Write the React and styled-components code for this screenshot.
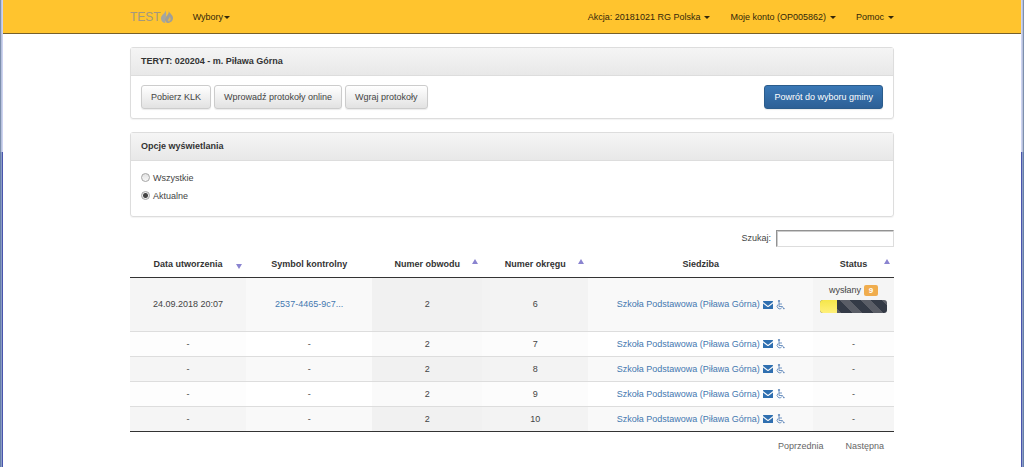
import React, { useState } from "react";
import styled, { createGlobalStyle, css } from "styled-components";

const GlobalStyle = createGlobalStyle`
  *, *::before, *::after { box-sizing: border-box; }
  body {
    margin: 0;
    background: #fff;
    color: #444;
    font: 9px/13px "Liberation Sans", Arial, Helvetica, sans-serif;
  }
  button, input { font: inherit; color: inherit; }
  a { text-decoration: none; }
`;

const Window = styled.div`
  display: grid;
  grid-template-columns: 3px minmax(0, 1fr) 3px;
  min-height: 100vh;
`;

const edgeColumn = (upper, lower) => css`
  linear-gradient(${upper} 152px, ${lower} 152px)
`;

const Edge = styled.div`
  display: flex;
  flex-direction: ${(p) => (p.$right ? "row-reverse" : "row")};
`;

const EdgeLine = styled.span`
  flex: 1;
  background: ${(p) => edgeColumn(p.$upper, p.$lower)};
`;

const Container = styled.div`
  max-width: 764px;
  margin: 0 auto;
`;

const Navbar = styled.header`
  background: #ffc42e;
  border-bottom: 1px solid #76602b;
`;

const NavInner = styled(Container)`
  display: flex;
  align-items: center;
  height: 33px;
  padding-top: 1px;
`;

const Brand = styled.a`
  display: flex;
  align-items: center;
  margin-right: 20px;
  color: #a3987f;
  font-size: 12px;

  svg { display: block; }
`;

const NavRight = styled.nav`
  display: flex;
  gap: 20px;
  margin-left: auto;
`;

const NavButton = styled.button`
  display: flex;
  align-items: center;
  gap: ${(p) => (p.$tight ? "1px" : "4px")};
  padding: 0;
  border: 0;
  background: none;
  color: #33270a;
  white-space: nowrap;

  &::after {
    content: "";
    border: 3px solid transparent;
    border-top-color: #33270a;
    border-bottom: 0;
  }
`;

const Panel = styled.section`
  margin-top: 13px;
  border: 1px solid #ddd;
  border-radius: 3px;
  box-shadow: 0 1px 1px rgba(0, 0, 0, 0.05);
`;

const PanelHeading = styled.h2`
  margin: 0;
  padding: 7px 10px;
  border-bottom: 1px solid #ddd;
  background: linear-gradient(#f5f5f5, #e8e8e8);
  color: #333;
  font-size: 9px;
  line-height: 13px;
`;

const ButtonBar = styled.div`
  display: flex;
  gap: 3px;
  padding: 9px 10px;
`;

const Button = styled.button`
  height: 24px;
  padding: 0 9px;
  border: 1px solid #ccc;
  border-radius: 3px;
  background: linear-gradient(#fff, #e2e2e2);
  box-shadow: 0 1px 1px rgba(0, 0, 0, 0.08);
  white-space: nowrap;

  ${(p) =>
    p.$primary &&
    css`
      margin-left: auto;
      border-color: #2b5c8c;
      background: linear-gradient(#3a78b6, #2d6096);
      color: #fff;
    `}
`;

const Options = styled.div`
  display: flex;
  flex-direction: column;
  gap: 5px;
  padding: 11px 10px 13px;
`;

const Option = styled.label`
  display: flex;
  align-items: center;
  gap: 3px;
`;

const Radio = styled.input`
  appearance: none;
  width: 9px;
  height: 9px;
  margin: 0 0 2px;
  border: 1px solid #a5a5a5;
  border-radius: 50%;
  background: linear-gradient(#e2e2e2, #f8f8f8);

  &:checked {
    background: radial-gradient(circle, #444 0 2px, #eee 3px);
  }
`;

const Search = styled.label`
  display: flex;
  align-items: center;
  justify-content: flex-end;
  gap: 5px;
  margin-top: 13px;
`;

const SearchInput = styled.input`
  width: 118px;
  height: 17px;
  padding: 0 3px;
  border: 1px solid #ddd;
  border-top-color: #929292;
  border-left-color: #929292;
  box-shadow: inset 1px 1px 0 #ccc;
  background: #fff;
`;

const Table = styled.table`
  width: 100%;
  margin-top: 4px;
  border-collapse: separate;
  border-spacing: 0;
  border-bottom: 1px solid #333;
  table-layout: fixed;
  text-align: center;
`;

const Col = styled.col`
  width: ${(p) => p.$share}%;
`;

const Th = styled.th`
  height: 27px;
  padding: 0;
  border-bottom: 1px solid #333;
  color: #333;
`;

const HeadLabel = styled.div`
  display: grid;
  grid-template-columns: 10px 1fr 10px;
  align-items: center;
`;

const SortArrow = styled.i`
  grid-column: 3;
  width: 6px;
  border: 3px solid transparent;
  ${(p) =>
    p.$dir === "down"
      ? css`border-top: 5px solid #8a84d0; border-bottom: 0; margin-top: 5px;`
      : css`border-bottom: 5px solid #8a84d0; border-top: 0; margin-bottom: 5px;`}
`;

const HeadText = styled.span`
  grid-column: 2;
`;

const oddShades = ["#f5f5f5", "#f9f9f9", "#f1f1f1", "#f3f3f3", "#f9f9f9", "#f5f5f5"];
const evenShades = ["#fdfdfd", "#ffffff", "#fafafa", "#fcfcfc", "#ffffff", "#fdfdfd"];

const Row = styled.tr`
  height: ${(p) => (p.$tall ? "53px" : "25px")};
`;

const Td = styled.td`
  padding: 0;
  border-top: ${(p) => (p.$row ? "1px solid #ddd" : "0")};
  background: ${(p) => (p.$row % 2 ? evenShades : oddShades)[p.$col]};
`;

const TextLink = styled.a`
  color: #4478b0;
`;

const Site = styled.div`
  display: flex;
  align-items: center;
  justify-content: center;
  gap: 3px;
  color: #2f6fb0;

  svg { display: block; flex: none; }
`;

const Status = styled.div`
  display: flex;
  flex-direction: column;
  gap: 3px;
  padding: 0 7px 12px;
`;

const StatusText = styled.div`
  display: flex;
  align-items: center;
  justify-content: center;
  gap: 3px;
`;

const Badge = styled.span`
  width: 14px;
  border-radius: 2px;
  background: #f0ad4e;
  color: #fff;
  font-size: 8px;
  font-weight: bold;
  line-height: 11px;
`;

const Progress = styled.div`
  height: 13px;
  overflow: hidden;
  border-radius: 3px;
  background: repeating-linear-gradient(45deg, #343a46 0 8px, #5a5d66 8px 15px);
`;

const ProgressFill = styled.div`
  width: 25%;
  height: 100%;
  background: linear-gradient(#f5e64a, #fff07a);
`;

const Pager = styled.nav`
  display: flex;
  justify-content: flex-end;
  gap: 22px;
  padding: 8px 10px;
`;

const PageButton = styled.button`
  padding: 0;
  border: 0;
  background: none;
  color: #666;
`;

function Flame() {
  return (
    <svg width="12" height="14" viewBox="0 0 12 14" aria-hidden="true">
      <path d="M4.500 0C5 3 0 4.500 0 8.500 0 11 2 13 4.500 13 2.500 10 7 6 4.500 0z" fill="#a5a6a0" />
      <path d="M7.500 0.500C9 4 4 6.500 4 9.500c0 2 1 3 2.500 3.500C10 13 12 10.500 12 8 12 5 9 4 7.500 .5z" fill="#a09f98" />
      <path d="M8.500 6.500c.5 2-2 2.500-1.500 4.500.6 1 2.700 0 2.700-2 0-1-.5-2-1.200-2.500z" fill="#e0b54a" />
    </svg>
  );
}

function Envelope() {
  return (
    <svg width="10" height="8" viewBox="0 0 20 16" aria-hidden="true">
      <path d="M1 0h18q1 0 1 1v1l-9 7q-1 .7-2 0L0 2V1q0-1 1-1zM0 5l8.500 6.500q1.500 1 3 0L20 5v10q0 1-1 1H1q-1 0-1-1z" fill="currentColor" />
    </svg>
  );
}

function Wheelchair() {
  return (
    <svg width="9" height="10" viewBox="0 0 18 20" aria-hidden="true" fill="none" stroke="#6189bb" strokeWidth="1.800">
      <circle cx="6" cy="2" r="1.500" fill="#6189bb" />
      <path d="M6 4v9h7l2.500 5 2-1M6 8h6M4 9a5 5 0 1 0 7.500 6.500" />
    </svg>
  );
}

const columns = [
  { title: "Data utworzenia", share: 15.2, sort: "down" },
  { title: "Symbol kontrolny", share: 16.5 },
  { title: "Numer obwodu", share: 14.4, sort: "up" },
  { title: "Numer okręgu", share: 13.9, sort: "up" },
  { title: "Siedziba", share: 29.4 },
  { title: "Status", share: 10.6, sort: "up" },
];

const rows = [
  { date: "24.09.2018 20:07", symbol: "2537-4465-9c7...", district: 6, progress: true },
  { district: 7 },
  { district: 8 },
  { district: 9 },
  { district: 10 },
];

function StatusCell() {
  return (
    <Status>
      <StatusText>wysłany <Badge>9</Badge></StatusText>
      <Progress><ProgressFill /></Progress>
    </Status>
  );
}

function ProtocolTable() {
  return (
    <Table>
      <colgroup>{columns.map((c) => <Col key={c.title} $share={c.share} />)}</colgroup>
      <thead>
        <tr>
          {columns.map((c) => (
            <Th key={c.title} scope="col">
              <HeadLabel>
                <HeadText>{c.title}</HeadText>
                {c.sort && <SortArrow $dir={c.sort} />}
              </HeadLabel>
            </Th>
          ))}
        </tr>
      </thead>
      <tbody>
        {rows.map((r, i) => {
          const cells = [
            r.date || "-",
            r.symbol ? <TextLink href="#symbol">{r.symbol}</TextLink> : "-",
            2,
            r.district,
            <Site>
              <TextLink href="#siedziba">Szkoła Podstawowa (Piława Górna)</TextLink>
              <Envelope />
              <Wheelchair />
            </Site>,
            r.progress ? <StatusCell /> : "-",
          ];
          return (
            <Row key={r.district} $tall={r.progress}>
              {cells.map((cell, j) => <Td key={j} $row={i} $col={j}>{cell}</Td>)}
            </Row>
          );
        })}
      </tbody>
    </Table>
  );
}

function WindowEdge({ right }) {
  return (
    <Edge $right={right} aria-hidden="true">
      <EdgeLine $upper="#7d8fae" $lower="#667fa9" />
      <EdgeLine $upper="#b9c3dc" $lower="#8b9cc6" />
      <EdgeLine $upper="#cdd3f2" $lower="#4855ad" />
    </Edge>
  );
}

export default function App() {
  const [view, setView] = useState("Aktualne");
  return (
    <>
      <GlobalStyle />
      <Window>
        <WindowEdge />
        <div>
          <Navbar>
            <NavInner>
              <Brand href="#start">TEST<Flame /></Brand>
              <NavButton $tight>Wybory</NavButton>
              <NavRight>
                <NavButton>Akcja: 20181021 RG Polska</NavButton>
                <NavButton>Moje konto (OP005862)</NavButton>
                <NavButton>Pomoc</NavButton>
              </NavRight>
            </NavInner>
          </Navbar>
          <Container as="main">
            <Panel>
              <PanelHeading>TERYT: 020204 - m. Piława Górna</PanelHeading>
              <ButtonBar>
                <Button>Pobierz KLK</Button>
                <Button>Wprowadź protokoły online</Button>
                <Button>Wgraj protokoły</Button>
                <Button $primary>Powrót do wyboru gminy</Button>
              </ButtonBar>
            </Panel>
            <Panel>
              <PanelHeading>Opcje wyświetlania</PanelHeading>
              <Options>
                {["Wszystkie", "Aktualne"].map((name) => (
                  <Option key={name}>
                    <Radio type="radio" name="view" checked={view === name} onChange={() => setView(name)} />
                    {name}
                  </Option>
                ))}
              </Options>
            </Panel>
            <Search>
              Szukaj:
              <SearchInput type="search" />
            </Search>
            <ProtocolTable />
            <Pager aria-label="Strony">
              <PageButton>Poprzednia</PageButton>
              <PageButton>Następna</PageButton>
            </Pager>
          </Container>
        </div>
        <WindowEdge right />
      </Window>
    </>
  );
}
